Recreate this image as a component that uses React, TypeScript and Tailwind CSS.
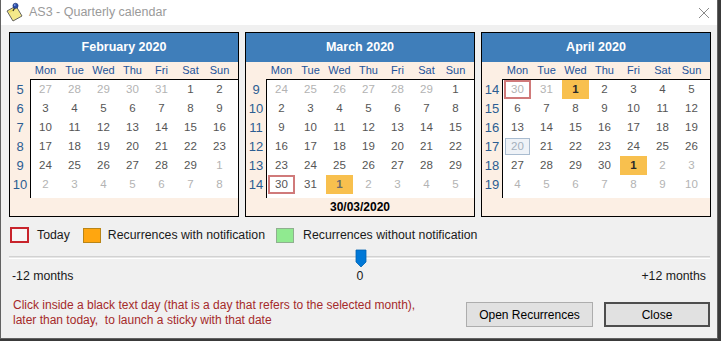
import React from "react";

type Cell = {
  n: number;
  o?: boolean;
  today?: boolean;
  orange?: boolean;
  bold?: boolean;
  sel?: boolean;
};

const c = (n: number, extra: Partial<Cell> = {}): Cell => ({ n, ...extra });
const o = (n: number, extra: Partial<Cell> = {}): Cell => ({ n, o: true, ...extra });
const run = (a: number, b: number, other = false): Cell[] => {
  const r: Cell[] = [];
  for (let i = a; i <= b; i++) r.push(other ? o(i) : c(i));
  return r;
};

const NAMES = ["Mon", "Tue", "Wed", "Thu", "Fri", "Sat", "Sun"];

const FEB: Cell[][] = [
  [...run(27, 31, true), c(1), c(2)],
  run(3, 9),
  run(10, 16),
  run(17, 23),
  [...run(24, 29), o(1)],
  run(2, 8, true),
];

const MAR: Cell[][] = [
  [...run(24, 29, true), c(1)],
  run(2, 8),
  run(9, 15),
  run(16, 22),
  run(23, 29),
  [c(30, { today: true }), c(31), o(1, { orange: true, bold: true }), ...run(2, 5, true)],
];

const APR: Cell[][] = [
  [o(30, { today: true }), o(31), c(1, { orange: true, bold: true }), ...run(2, 5)],
  run(6, 12),
  run(13, 19),
  [c(20, { sel: true }), ...run(21, 26)],
  [...run(27, 30), c(1, { orange: true, bold: true }), o(2), o(3)],
  run(4, 10, true),
];

function DayCell({ cell }: { cell: Cell }) {
  let color = cell.o ? "text-[#b3b3b3]" : "text-[#555555]";
  if (cell.sel) color = "text-[#a4b0bd]";
  if (cell.orange) color = cell.o ? "text-[#6b6b6b]" : "text-[#2a2a2a]";
  return (
    <div className="w-[29px] h-[19px] flex items-stretch justify-center">
      <div
        className={[
          "flex-1 flex items-center justify-center text-[11.5px]",
          color,
          cell.bold ? "font-bold" : "",
          cell.today ? "mx-[1px] border-2 border-[#d07a7a]" : "",
          cell.orange ? "mx-[1px] bg-[#f8c04e]" : "",
          cell.sel ? "mx-[2px] my-[1px] border border-[#a9bcd0] bg-[#eef2f7]" : "",
        ].join(" ")}
      >
        {cell.n}
      </div>
    </div>
  );
}

function Calendar({
  title,
  weeks,
  rows,
  footer,
}: {
  title: string;
  weeks: number[];
  rows: Cell[][];
  footer?: string;
}) {
  return (
    <div className="w-[230px] h-[185px] border border-black bg-[#fcefe4] flex flex-col">
      <div className="h-[29px] bg-[#3f7eba] flex items-center justify-center text-white font-bold text-[12.5px]">
        {title}
      </div>
      <div className="h-[17px] flex items-center">
        <div className="w-[21px]" />
        {NAMES.map((n) => (
          <div key={n} className="w-[29px] text-center text-[11px] text-[#22539a]">
            {n}
          </div>
        ))}
      </div>
      <div className="h-[119px] flex">
        <div className="w-[20px] pt-[1px] flex flex-col">
          {weeks.map((w) => (
            <div key={w} className="h-[19px] flex items-center justify-center text-[13px] text-[#2c5d92]">
              {w}
            </div>
          ))}
        </div>
        <div className="flex-1 bg-white border-l border-t border-black flex flex-col">
          {rows.map((r, i) => (
            <div key={i} className="flex">
              {r.map((cell, j) => (
                <DayCell key={j} cell={cell} />
              ))}
            </div>
          ))}
        </div>
      </div>
      <div className="flex-1 flex items-center justify-center text-[12px] font-bold text-black">
        {footer}
      </div>
    </div>
  );
}

function AppIcon() {
  return (
    <svg width="20" height="20" viewBox="0 0 20 20">
      <polygon points="3,9 12,4 18,14 9,19" fill="#f4e98a" stroke="#555" strokeWidth="0.9" />
      <polygon points="4.5,9.5 11.5,5.5 12.5,7 5.5,11" fill="#e8d860" />
      <line x1="9" y1="9" x2="11" y2="5" stroke="#333" strokeWidth="1.2" />
      <circle cx="11.5" cy="3.8" r="2.6" fill="#2b4fa8" stroke="#1a2f70" strokeWidth="0.6" />
      <circle cx="10.8" cy="3.1" r="0.8" fill="#9fb6ff" />
    </svg>
  );
}

export default function App() {
  return (
    <div className="w-[721px] h-[341px] bg-[#3a3a3a] font-['Liberation_Sans',Arial,sans-serif] overflow-hidden">
      <div className="w-[718px] h-[339px] border-x border-b border-[#626262] bg-[#f0f0f0] flex flex-col">
        <div className="h-[25px] bg-white flex items-center">
          <div className="ml-[3px] mt-[-2px]">
            <AppIcon />
          </div>
          <div className="ml-[5px] text-[12.5px] text-[#9a9a9a]">AS3 - Quarterly calendar</div>
          <div className="flex-1" />
          <svg width="12" height="12" viewBox="0 0 12 12" className="mr-[7px]">
            <line x1="1" y1="1" x2="11" y2="11" stroke="#8a8a8a" strokeWidth="1" />
            <line x1="11" y1="1" x2="1" y2="11" stroke="#8a8a8a" strokeWidth="1" />
          </svg>
        </div>
        <div className="pl-[8px] pr-[6px] pt-[7px] flex flex-col">
          <div className="flex gap-[6px]">
            <Calendar title="February 2020" weeks={[5, 6, 7, 8, 9, 10]} rows={FEB} />
            <Calendar title="March 2020" weeks={[9, 10, 11, 12, 13, 14]} rows={MAR} footer="30/03/2020" />
            <Calendar title="April 2020" weeks={[14, 15, 16, 17, 18, 19]} rows={APR} />
          </div>

          <div className="mt-[10px] h-[16px] flex items-center text-[12.3px] text-[#1a1a1a]">
            <div className="ml-[1px] w-[19px] h-[16px] border-2 border-[#c8242c] bg-[#f6f6f6]" />
            <div className="ml-[8px]">Today</div>
            <div className="ml-[13px] w-[18px] h-[15px] border border-[#b98517] bg-[#ffa60f]" />
            <div className="ml-[7px]">Recurrences with notification</div>
            <div className="ml-[11px] w-[18px] h-[15px] border border-[#8fb08f] bg-[#90ea90]" />
            <div className="ml-[9px]">Recurrences without notification</div>
          </div>

          <div className="relative mt-[5px] h-[20px] mr-[1px]">
            <div className="mt-[8px] h-[3px] border-t border-[#d2d2d2] bg-[#e6e6e6] border-b border-b-white" />
            <svg
              width="12"
              height="19"
              viewBox="0 0 12 19"
              className="absolute left-[346px] top-[1px]"
            >
              <path d="M1 1 H11 V13 L6 18 L1 13 Z" fill="#0078d7" stroke="#0063b1" strokeWidth="0.8" />
            </svg>
          </div>

          <div className="h-[16px] flex items-center text-[12.3px] text-[#1a1a1a]">
            <div className="ml-[3px] w-[340px]">-12 months</div>
            <div className="w-[16px] text-center">0</div>
            <div className="flex-1 text-right mr-[5px]">+12 months</div>
          </div>

          <div className="mt-[14px] flex items-start">
            <div className="ml-[4px] text-[12px] leading-[15px] text-[#a52a2a] w-[440px]">
              <div>Click inside a black text day (that is a day that refers to the selected month),</div>
              <div>later than today,&nbsp; to launch a sticky with that date</div>
            </div>
            <div className="flex-1" />
            <button className="mt-[4px] w-[127px] h-[25px] bg-[#e1e1e1] border border-[#adadad] text-[12px] text-black">
              Open Recurrences
            </button>
            <button className="mt-[4px] ml-[11px] w-[106px] h-[25px] bg-[#e1e1e1] border-2 border-[#4d4d4d] text-[12px] text-black mr-[1px]">
              Close
            </button>
          </div>
        </div>
      </div>
    </div>
  );
}
